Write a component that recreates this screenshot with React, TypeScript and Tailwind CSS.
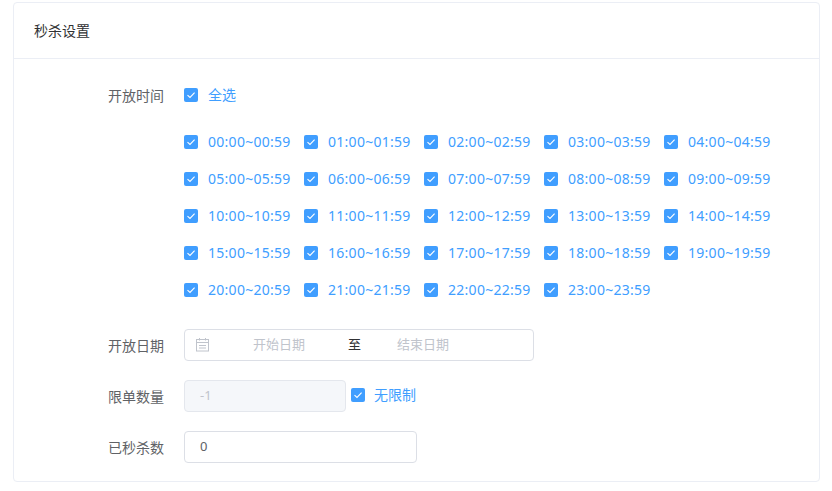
const FONT = '[font-family:"Noto_Sans","Noto_Sans_CJK_SC",sans-serif]';

function Check({ label, time, gap }: { label: string; time?: boolean; gap?: string }) {
  return (
    <label className="flex items-center text-[14px] leading-[20px] text-[#409eff]">
      <span className="flex h-[14px] w-[14px] items-center justify-center rounded-[2px] bg-[#409eff]">
        <svg width="10" height="10" viewBox="0 0 10 10" fill="none">
          <path d="M1.5 5.1 4 7.5 8.6 2.6" stroke="#fff" strokeWidth="1.1" />
        </svg>
      </span>
      <span className={`${gap ?? "ml-[10px]"} whitespace-nowrap ${time ? "tracking-[0.28px]" : ""}`}>{label}</span>
    </label>
  );
}

function Row({ label, children, className }: { label: string; children: React.ReactNode; className?: string }) {
  return (
    <div className={`flex items-center ${className ?? ""}`}>
      <div className="w-[150px] pr-[20px] text-right text-[14px] text-[#606266]">{label}</div>
      {children}
    </div>
  );
}

const slots = Array.from({ length: 24 }, (_, i) => {
  const h = String(i).padStart(2, "0");
  return `${h}:00~${h}:59`;
});

export default function App() {
  return (
    <div className={`h-[491px] w-[832px] overflow-hidden bg-white pl-[13px] pt-[2px] ${FONT}`}>
      <div className="h-[480px] w-[807px] rounded-[4px] border border-[#ebeef5] bg-white">
        <div className="flex h-[56px] items-center border-b border-[#ebeef5] px-[20px] text-[14px] text-[#303133]">秒杀设置</div>
        <div className="pl-[20px]">
          <Row label="开放时间" className="mt-[26px] h-[20px]">
            <Check label="全选" />
          </Row>
          <div className="ml-[150px] mt-[27px] grid w-[600px] grid-cols-[repeat(5,120px)] gap-y-[17px]">
            {slots.map((s) => (
              <Check key={s} label={s} time />
            ))}
          </div>
          <Row label="开放日期" className="mt-[29px] h-[32px]">
            <div className="flex h-[32px] w-[350px] items-center rounded-[4px] border border-[#dcdfe6] pl-[11px] text-[13px]">
              <svg width="14" height="14" viewBox="0 0 14 14" fill="none" stroke="#c0c4cc" strokeWidth="1">
                <rect x="0.5" y="1.5" width="12" height="11.5" />
                <path d="M0.5 4.5h12M3 7.5h7M3 10h7M3.5 0v2.5M9.5 0v2.5" />
              </svg>
              <span className="ml-[43px] w-[52px] whitespace-nowrap text-[#c0c4cc]">开始日期</span>
              <span className="ml-[43px] text-[#303133]">至</span>
              <span className="ml-[36px] w-[52px] whitespace-nowrap text-[#c0c4cc]">结束日期</span>
            </div>
          </Row>
          <Row label="限单数量" className="mt-[19px] h-[32px]">
            <div className="flex h-[32px] w-[162px] items-center rounded-[4px] border border-[#e4e7ed] bg-[#f5f7fa] pl-[15px] text-[13px] text-[#c0c4cc]">-1</div>
            <div className="ml-[5px] -translate-y-[1px]"><Check label="无限制" gap="ml-[9px]" /></div>
          </Row>
          <Row label="已秒杀数" className="mt-[19px] h-[32px]">
            <div className="flex h-[32px] w-[233px] items-center rounded-[4px] border border-[#dcdfe6] pl-[15px] text-[13px] text-[#606266]">0</div>
          </Row>
        </div>
      </div>
    </div>
  );
}
